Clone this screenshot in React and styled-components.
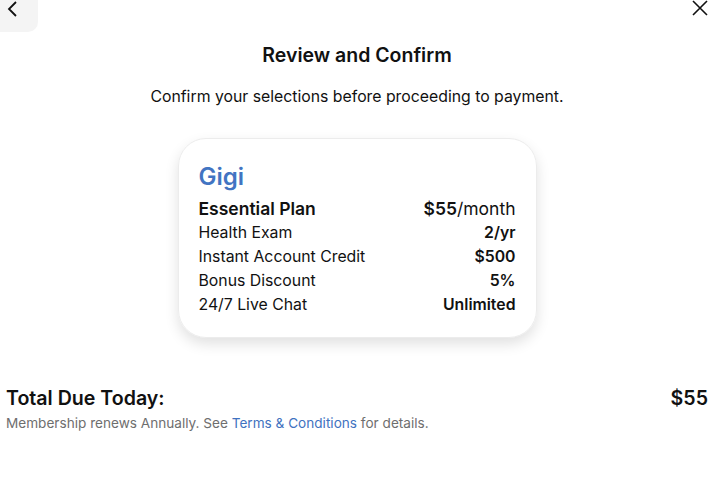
import React from 'react'
import styled, { createGlobalStyle } from 'styled-components';

const GlobalStyle = createGlobalStyle`
    body {
        margin: 0;
        background: #ffffff;
        font-family: Inter, "Noto Sans", sans-serif;
        color: #111111;
    }
`;

const Page = styled.div`
    position: relative;
    width: 714px;
    height: 491px;
    display: flex;
    flex-direction: column;
    align-items: center;
`;

const BackButton = styled.button`
    position: absolute;
    top: 0;
    left: 0;
    width: 38px;
    height: 32px;
    border: none;
    background-color: #f4f4f4;
    border-bottom-right-radius: 10px;
    display: flex;
    align-items: flex-start;
    justify-content: flex-start;
    padding: 1px 0 0 6px;
`;

const CloseButton = styled.button`
    position: absolute;
    top: 0;
    right: 6px;
    border: none;
    background: none;
    padding: 0;
`;

const Title = styled.h2`
    margin: 43px 0 0;
    font-size: 19.5px;
    font-weight: 600;
    line-height: 24px;
`;

const Subtitle = styled.p`
    margin: 20px 0 0;
    font-size: 15.8px;
    line-height: 20px;
`;

const Card = styled.div`
    margin-top: 31px;
    width: 359px;
    box-sizing: border-box;
    padding: 23px 20px 20px;
    border-radius: 28px;
    border: 1px solid #ececec;
    box-shadow: 0 6px 14px rgba(0, 0, 0, 0.12);
    display: flex;
    flex-direction: column;
`;

const Brand = styled.div`
    color: #4274c2;
    font-size: 24px;
    font-weight: 600;
    line-height: 30px;
    margin-bottom: 5px;
`;

const Row = styled.div`
    display: flex;
    justify-content: space-between;
    align-items: baseline;
    font-size: ${p => (p.$main ? '17.5px' : '15.8px')};
    font-weight: ${p => (p.$main ? 600 : 400)};
    line-height: 24px;
`;

const Value = styled.span`
    font-weight: 600;
`;

const Light = styled.span`
    font-weight: 400;
`;

const Footer = styled.div`
    align-self: stretch;
    margin: 48px -12px 0 0;
    padding: 0 18px 0 6px;
    display: flex;
    flex-direction: column;
`;

const TotalRow = styled.div`
    display: flex;
    justify-content: space-between;
    font-size: 19.6px;
    font-weight: 600;
    line-height: 24px;
`;

const Note = styled.p`
    margin: 4px 0 0;
    font-size: 13.6px;
    line-height: 18px;
    color: #6e6e6e;
`;

const Link = styled.a`
    color: #3f72c0;
    text-decoration: none;
`;

const rows = [
    ['Health Exam', '2/yr'],
    ['Instant Account Credit', '$500'],
    ['Bonus Discount', '5%'],
    ['24/7 Live Chat', 'Unlimited'],
];

const App = () => {
    return (
        <Page>
            <GlobalStyle />
            <BackButton aria-label="Back">
                <svg width="14" height="16" viewBox="0 0 14 16" fill="none" stroke="#111" strokeWidth="1.8">
                    <path d="M10 1 L3 8 L10 15" />
                </svg>
            </BackButton>
            <CloseButton aria-label="Close">
                <svg width="16" height="16" viewBox="0 0 16 16" fill="none" stroke="#111" strokeWidth="1.6">
                    <path d="M1 1 L15 15 M15 1 L1 15" />
                </svg>
            </CloseButton>

            <Title>Review and Confirm</Title>
            <Subtitle>Confirm your selections before proceeding to payment.</Subtitle>

            <Card>
                <Brand>Gigi</Brand>
                <Row $main>
                    <span>Essential Plan</span>
                    <span>$55<Light>/month</Light></span>
                </Row>
                {rows.map(([label, value]) => (
                    <Row key={label}>
                        <span>{label}</span>
                        <Value>{value}</Value>
                    </Row>
                ))}
            </Card>

            <Footer>
                <TotalRow>
                    <span>Total Due Today:</span>
                    <span>$55</span>
                </TotalRow>
                <Note>
                    Membership renews Annually. See <Link href="#">Terms &amp; Conditions</Link> for details.
                </Note>
            </Footer>
        </Page>
    )
}

export default App
